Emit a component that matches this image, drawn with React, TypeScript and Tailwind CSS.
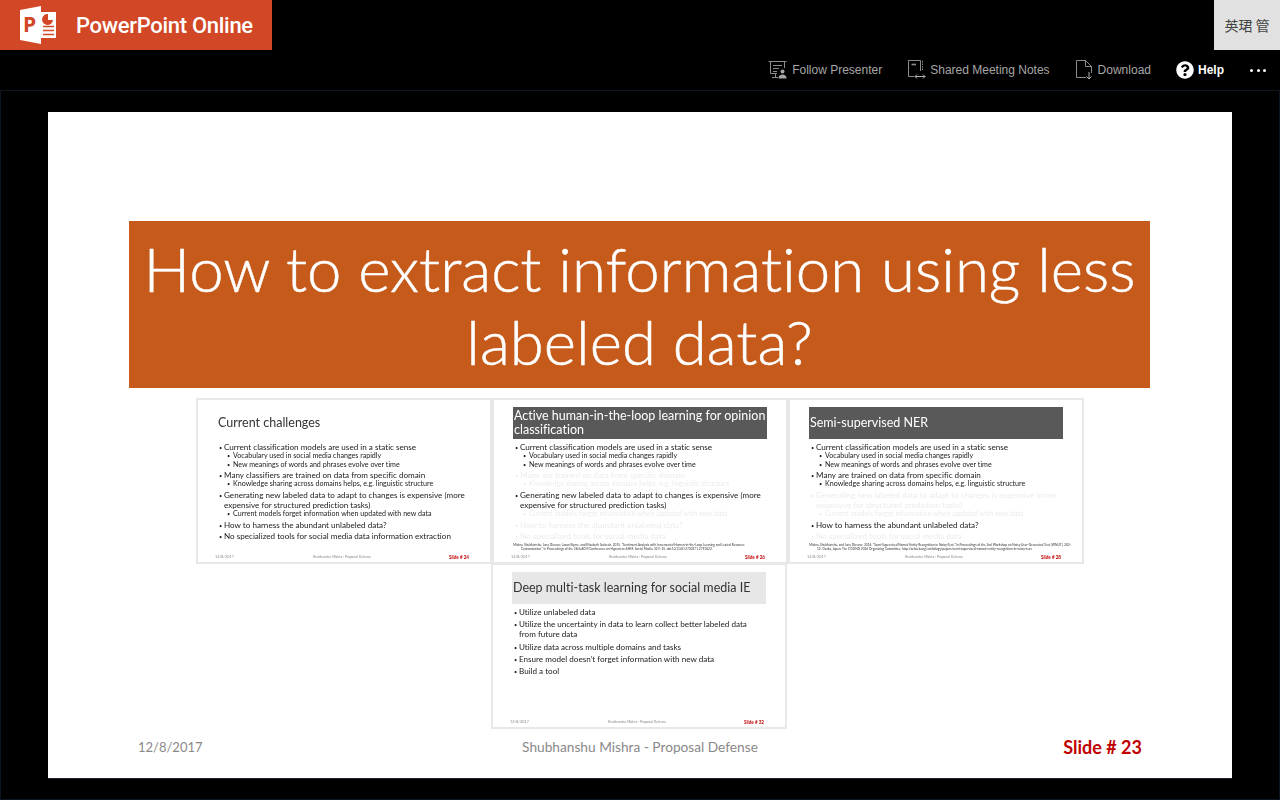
import React from 'react';
import { FaQuestionCircle } from 'react-icons/fa';

type Line = {
    text: string;
    sub?: boolean;
    dim?: boolean;
};

interface ThumbProps {
    title: string;
    titleBar?: 'dark' | 'light';
    lines: Line[];
    cite?: string[];
    slide: string;
    top: string;
    gap?: string;
}

const Thumb: React.FC<ThumbProps> = ({ title, titleBar, lines, cite, slide, top, gap = 'mt-[1.2px]' }) => {
    return (
        <div className="relative flex h-[166px] w-[296px] shrink-0 flex-col border-2 border-[#e8e8e8] bg-white font-['Lato',sans-serif] text-[#222] [font-variant-ligatures:none]">
            <div className="blur-[0.25px]">
                {titleBar ? (
                    <div
                        className={
                            titleBar === 'dark'
                                ? 'mx-[19px] mt-[7px] flex h-[32px] items-center whitespace-pre-line bg-[#595959] px-[1px] text-[12.5px] leading-[14.5px] text-white'
                                : 'mx-[19px] mt-[7px] flex h-[32px] items-center whitespace-pre-line bg-[#e7e7e7] px-[1px] text-[12.5px] leading-[14.5px] text-[#333]'
                        }
                    >
                        {title}
                    </div>
                ) : (
                    <div className="ml-[20px] mt-[7px] flex h-[32px] items-center text-[12.5px] text-[#333]">{title}</div>
                )}
                <div className={top}>
                    {lines.map((l, i) => (
                        <div
                            key={i}
                            className={
                                (l.sub
                                    ? 'ml-[29px] text-[7.1px] leading-[8.5px] '
                                    : 'ml-[21px] whitespace-pre-line pl-[5px] -indent-[5px] text-[8.1px] leading-[10px] ' + gap + ' ') +
                                (l.dim ? 'text-[#ececec]' : '')
                            }
                        >
                            <span className={l.sub ? 'inline-block w-[6px] indent-0 text-[5.5px] leading-[0]' : 'inline-block w-[5px] indent-0 text-[5.5px] leading-[0]'}>•</span>
                            {l.text}
                        </div>
                    ))}
                </div>
            </div>
            {cite && (
                <div className="absolute left-[19px] top-[143px] whitespace-nowrap text-[3.2px] leading-[4.4px] text-[#333] blur-[0.2px]">
                    {cite.map((c, i) => (
                        <div key={i} className={i > 0 ? 'pl-[8px]' : ''}>
                            {c}
                        </div>
                    ))}
                </div>
            )}
            <div className="mb-[2px] mt-auto grid grid-cols-[1fr_auto_1fr] items-center pl-[17px] pr-[21px] text-[3.4px] leading-[6px] text-[#888] blur-[0.2px]">
                <span className="text-[3.8px]">12/8/2017</span>
                <span>Shubhanshu Mishra - Proposal Defense</span>
                <span className="text-right text-[4.6px] font-bold text-[#c00000]">{slide}</span>
            </div>
        </div>
    );
};

const FollowIcon = () => (
    <svg width="20" height="20" viewBox="0 0 20 20" fill="none" stroke="#8c8c8c" strokeWidth="1">
        <path d="M0.5 1.5H18.5M2.5 1.5V13.5H9M16.5 1.5V8M5 5.5H14M5 8.5H11M5 11.5H9M7.5 13.5V17.5M4 17.5H10" />
        <circle cx="14.5" cy="11.5" r="2" fill="#a6a6a6" stroke="none" />
        <path d="M10.5 18.5C10.5 15.5 12.5 14.5 14.5 14.5C16.5 14.5 18.5 15.5 18.5 18.5Z" fill="#a6a6a6" stroke="none" />
    </svg>
);

const NotesIcon = () => (
    <svg width="18" height="20" viewBox="0 0 18 20" fill="none" stroke="#8c8c8c" strokeWidth="1">
        <path d="M6 16.5H0.5V0.5H12.5V11" />
        <path d="M3.5 4.5H8" strokeWidth="1.6" />
        <path d="M14.5 1V11" strokeDasharray="1.5 1" />
        <path d="M7 16.5H17M9 14.5L7 16.5L9 18.5M15 14.5L17 16.5L15 18.5" stroke="#b0b0b0" />
    </svg>
);

const DownloadIcon = () => (
    <svg width="17" height="20" viewBox="0 0 17 20" fill="none" stroke="#8c8c8c" strokeWidth="1">
        <path d="M10 17.5H0.5V0.5H9.5L15.5 6.5V13M9.5 0.5V6.5H15.5" />
        <path d="M13 12V19M10.5 16.5L13 19L15.5 16.5" stroke="#b0b0b0" />
    </svg>
);

const PptLogo = () => (
    <svg width="38" height="38" viewBox="0 0 38 38" className="shrink-0">
        <path d="M21 6H36V32H21Z" fill="white" />
        <path d="M0 4L21 0V38L0 34Z" fill="white" />
        <text x="3" y="26" fontSize="21" fontWeight="700" fontFamily="Open Sans, sans-serif" fill="#d24726">
            P
        </text>
        <path d="M29 9A5.5 5.5 0 1 0 34 15H29Z" fill="#d24726" transform="translate(-1 -1)" />
        <path d="M23 20.5H34M23 24.5H34M23 28.5H34" stroke="#d24726" strokeWidth="1.4" />
    </svg>
);

const App: React.FC = () => {
    return (
        <div className="flex h-[800px] w-[1280px] flex-col overflow-hidden bg-black font-['Liberation_Sans',sans-serif]">
            <div className="flex h-[50px] justify-between">
                <div className="flex w-[272px] items-center bg-[#d24726] pl-[20px] text-white">
                    <PptLogo />
                    <span className="ml-[18px] font-['Roboto',sans-serif] text-[22px] font-medium tracking-[-0.3px]">
                        PowerPoint Online
                    </span>
                </div>
                <div className="flex w-[66px] items-center justify-center bg-[#e1e1e1] font-['Noto_Sans_CJK_TC',sans-serif] text-[14px] text-[#444]">
                    英珺 管
                </div>
            </div>

            <div className="flex h-[40px] items-center justify-end gap-[26px] pr-[14px] text-[12px] text-[#a6a6a6]">
                <div className="flex items-center gap-[4px]">
                    <FollowIcon />
                    <span>Follow Presenter</span>
                </div>
                <div className="flex items-center gap-[4px]">
                    <NotesIcon />
                    <span>Shared Meeting Notes</span>
                </div>
                <div className="flex items-center gap-[5px]">
                    <DownloadIcon />
                    <span>Download</span>
                </div>
                <div className="-ml-[1px] flex items-center gap-[4px] font-bold text-white">
                    <FaQuestionCircle className="text-[18px]" />
                    <span>Help</span>
                </div>
                <div className="flex w-[16px] justify-between">
                    <div className="size-[3px] rounded-full bg-white" />
                    <div className="size-[3px] rounded-full bg-white" />
                    <div className="size-[3px] rounded-full bg-white" />
                </div>
            </div>

            <div className="flex-1 border border-[#0b1620] pl-[47px] pr-[47px] pt-[21px]">
                <div className="h-[667px] w-[1184px] border-b border-[#1a2230] bg-white font-['Lato',sans-serif]">
                    <div className="pt-[109px]">
                        <div className="ml-[81px] flex h-[167px] w-[1021px] items-center justify-center bg-[#c55a1a] text-center text-[61.75px] font-light leading-[73px] text-white [-webkit-text-stroke:0.5px_white] [font-variant-ligatures:none]">
                            How to extract information using less
                            <br />
                            labeled data?
                        </div>
                    </div>

                    <div className="mt-[10px] flex justify-center">
                        <Thumb
                            title="Current challenges"
                            top="mt-[3.3px]"
                            slide="Slide # 24"
                            lines={[
                                { text: 'Current classification models are used in a static sense' },
                                { text: 'Vocabulary used in social media changes rapidly', sub: true },
                                { text: 'New meanings of words and phrases evolve over time', sub: true },
                                { text: 'Many classifiers are trained on data from specific domain' },
                                { text: 'Knowledge sharing across domains helps, e.g. linguistic structure', sub: true },
                                { text: 'Generating new labeled data to adapt to changes is expensive (more\nexpensive for structured prediction tasks)' },
                                { text: 'Current models forget information when updated with new data', sub: true },
                                { text: 'How to harness the abundant unlabeled data?' },
                                { text: 'No specialized tools for social media data information extraction' },
                            ]}
                        />
                        <Thumb
                            title={'Active human-in-the-loop learning for opinion\nclassification'}
                            titleBar="dark"
                            top="mt-[3.3px]"
                            slide="Slide # 26"
                            cite={[
                                'Mishra, Shubhanshu, Jana Diesner, Jason Byrne, and Elizabeth Surbeck. 2015. "Sentiment Analysis with Incremental Human-in-the-Loop Learning and Lexical Resource',
                                'Customization." In Proceedings of the 26th ACM Conference on Hypertext &HM, Social Media, 323–25. doi:10.1145/2700171.2791022.',
                            ]}
                            lines={[
                                { text: 'Current classification models are used in a static sense' },
                                { text: 'Vocabulary used in social media changes rapidly', sub: true },
                                { text: 'New meanings of words and phrases evolve over time', sub: true },
                                { text: 'Many are trained on data from specific domain', dim: true },
                                { text: 'Knowledge sharing across domains helps, e.g. linguistic structure', sub: true, dim: true },
                                { text: 'Generating new labeled data to adapt to changes is expensive (more\nexpensive for structured prediction tasks)' },
                                { text: 'Current models forget information when updated with new data', sub: true, dim: true },
                                { text: 'How to harness the abundant unlabeled data?', dim: true },
                                { text: 'No specialized tools for social media data', dim: true },
                            ]}
                        />
                        <Thumb
                            title="Semi-supervised NER"
                            titleBar="dark"
                            top="mt-[3.3px]"
                            slide="Slide # 28"
                            cite={[
                                'Mishra, Shubhanshu, and Jana Diesner. 2016. "Semi-Supervised Named Entity Recognition in Noisy-Text." In Proceedings of the 2nd Workshop on Noisy User-Generated Text (WNUT), 203–',
                                '12. Osaka, Japan: The COLING 2016 Organizing Committee. http://aclweb.org/anthology/papers/semi-supervised-named-entity-recognition-in-noisy-text.',
                            ]}
                            lines={[
                                { text: 'Current classification models are used in a static sense' },
                                { text: 'Vocabulary used in social media changes rapidly', sub: true },
                                { text: 'New meanings of words and phrases evolve over time', sub: true },
                                { text: 'Many are trained on data from specific domain' },
                                { text: 'Knowledge sharing across domains helps, e.g. linguistic structure', sub: true },
                                { text: 'Generating new labeled data to adapt to changes is expensive (more\nexpensive for structured prediction tasks)', dim: true },
                                { text: 'Current models forget information when updated with new data', sub: true, dim: true },
                                { text: 'How to harness the abundant unlabeled data?' },
                                { text: 'No specialized tools for social media data', dim: true },
                            ]}
                        />
                    </div>

                    <div className="-mt-[1px] flex justify-center pr-[2px]">
                        <Thumb
                            title="Deep multi-task learning for social media IE"
                            titleBar="light"
                            top="mt-[3px]"
                            gap="mt-[2.3px]"
                            slide="Slide # 32"
                            lines={[
                                { text: 'Utilize unlabeled data' },
                                { text: 'Utilize the uncertainty in data to learn collect better labeled data\nfrom future data' },
                                { text: 'Utilize data across multiple domains and tasks' },
                                { text: 'Ensure model doesn’t forget information with new data' },
                                { text: 'Build a tool' },
                            ]}
                        />
                    </div>

                    <div className="mt-[7px] grid grid-cols-[1fr_auto_1fr] items-center px-[90px] text-[13.7px] leading-[22px] text-[#898989]">
                        <span className="text-[13px]">12/8/2017</span>
                        <span>Shubhanshu Mishra - Proposal Defense</span>
                        <span className="text-right text-[18px] font-bold text-[#c00000]">Slide # 23</span>
                    </div>
                </div>
            </div>
        </div>
    );
};

export default App;
